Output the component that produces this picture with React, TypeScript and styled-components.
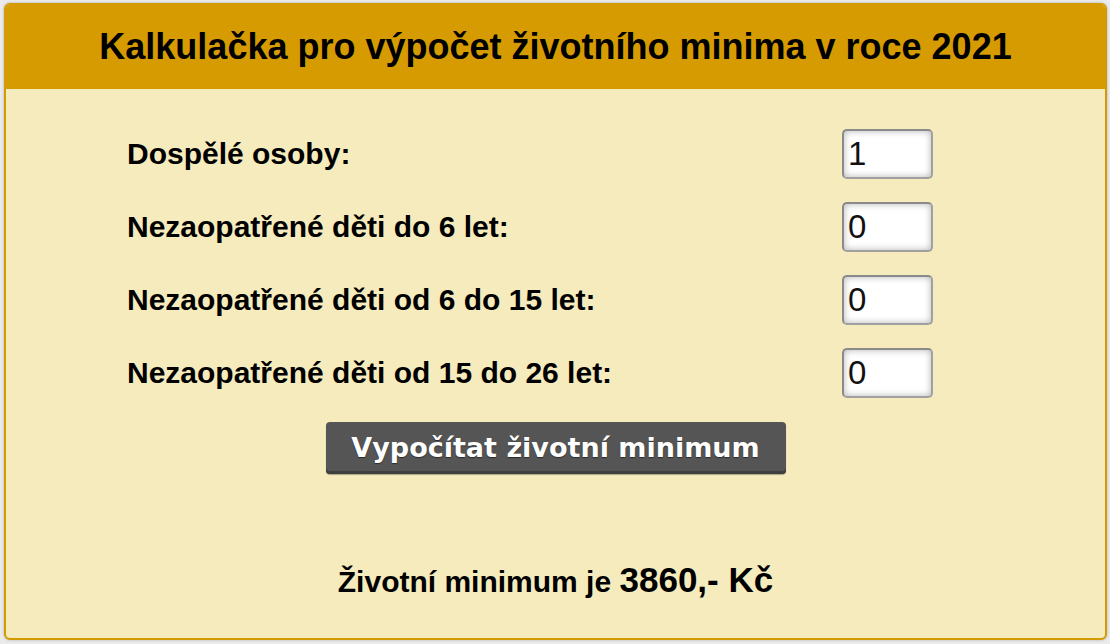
import React, { useState } from "react";
import styled, { createGlobalStyle } from "styled-components";

const GlobalStyle = createGlobalStyle`
  html, body {
    margin: 0;
    padding: 0;
    background: #ebebeb;
  }
  body {
    font-family: "Liberation Sans", Arial, sans-serif;
  }
`;

const Page = styled.div`
  padding: 3px 3px 4px 4px;
`;

const Card = styled.section`
  box-sizing: border-box;
  height: 637px;
  border: 2px solid #d49b00;
  border-radius: 6px;
  background: #f5ebbd;
  box-shadow: 0 0 3px rgba(0, 0, 0, 0.25);
  display: flex;
  flex-direction: column;
  overflow: hidden;
`;

const Header = styled.header`
  height: 84px;
  background: #d59b00;
  display: flex;
  align-items: center;
  justify-content: center;
`;

const Title = styled.h1`
  margin: 0;
  font-size: 36px;
  font-weight: bold;
  color: #000;
`;

const Form = styled.div`
  display: grid;
  grid-template-columns: 1fr 91px;
  row-gap: 23px;
  padding: 40px 172px 0 121px;
  align-items: center;
`;

const Label = styled.label`
  font-size: 30px;
  font-weight: bold;
  color: #000;
`;

const NumberInput = styled.input`
  box-sizing: border-box;
  width: 91px;
  height: 50px;
  border: 2px solid #a0a0a0;
  border-top-color: #8a8a8a;
  border-left-color: #8a8a8a;
  border-radius: 5px;
  background: #fff;
  box-shadow: inset 0 0 7px rgba(0, 0, 0, 0.3);
  padding: 0 4px;
  font-family: "Liberation Sans", Arial, sans-serif;
  font-size: 33px;
  color: #111;
  outline: none;
`;

const ButtonRow = styled.div`
  display: flex;
  justify-content: center;
  padding-top: 24px;
`;

const Button = styled.button`
  width: 460px;
  height: 52px;
  border: none;
  border-radius: 4px;
  background: #555555;
  box-shadow: inset 0 -3px 0 #3f3f3f, 0 1px 1px rgba(0, 0, 0, 0.3);
  color: #fff;
  font-family: "DejaVu Sans", Verdana, sans-serif;
  font-weight: bold;
  font-size: 27px;
  text-shadow: 0 1px 1px rgba(0, 0, 0, 0.5);
  padding-bottom: 3px;
  cursor: pointer;
`;

const Result = styled.p`
  margin: 86px 0 0;
  text-align: center;
  font-size: 30px;
  font-weight: bold;
  color: #000;
`;

const Amount = styled.span`
  font-size: 35px;
`;

const rows = [
  { id: "adults", label: "Dospělé osoby:", initial: "1" },
  { id: "kids6", label: "Nezaopatřené děti do 6 let:", initial: "0" },
  { id: "kids15", label: "Nezaopatřené děti od 6 do 15 let:", initial: "0" },
  { id: "kids26", label: "Nezaopatřené děti od 15 do 26 let:", initial: "0" },
];

export default function App() {
  const [values, setValues] = useState<Record<string, string>>(
    Object.fromEntries(rows.map((r) => [r.id, r.initial]))
  );

  return (
    <Page>
      <GlobalStyle />
      <Card>
        <Header>
          <Title>Kalkulačka pro výpočet životního minima v roce 2021</Title>
        </Header>
        <Form>
          {rows.map((r) => (
            <React.Fragment key={r.id}>
              <Label htmlFor={r.id}>{r.label}</Label>
              <NumberInput
                id={r.id}
                value={values[r.id]}
                onChange={(e) => setValues({ ...values, [r.id]: e.target.value })}
              />
            </React.Fragment>
          ))}
        </Form>
        <ButtonRow>
          <Button type="button">Vypočítat životní minimum</Button>
        </ButtonRow>
        <Result>
          Životní minimum je <Amount>3860,- Kč</Amount>
        </Result>
      </Card>
    </Page>
  );
}
